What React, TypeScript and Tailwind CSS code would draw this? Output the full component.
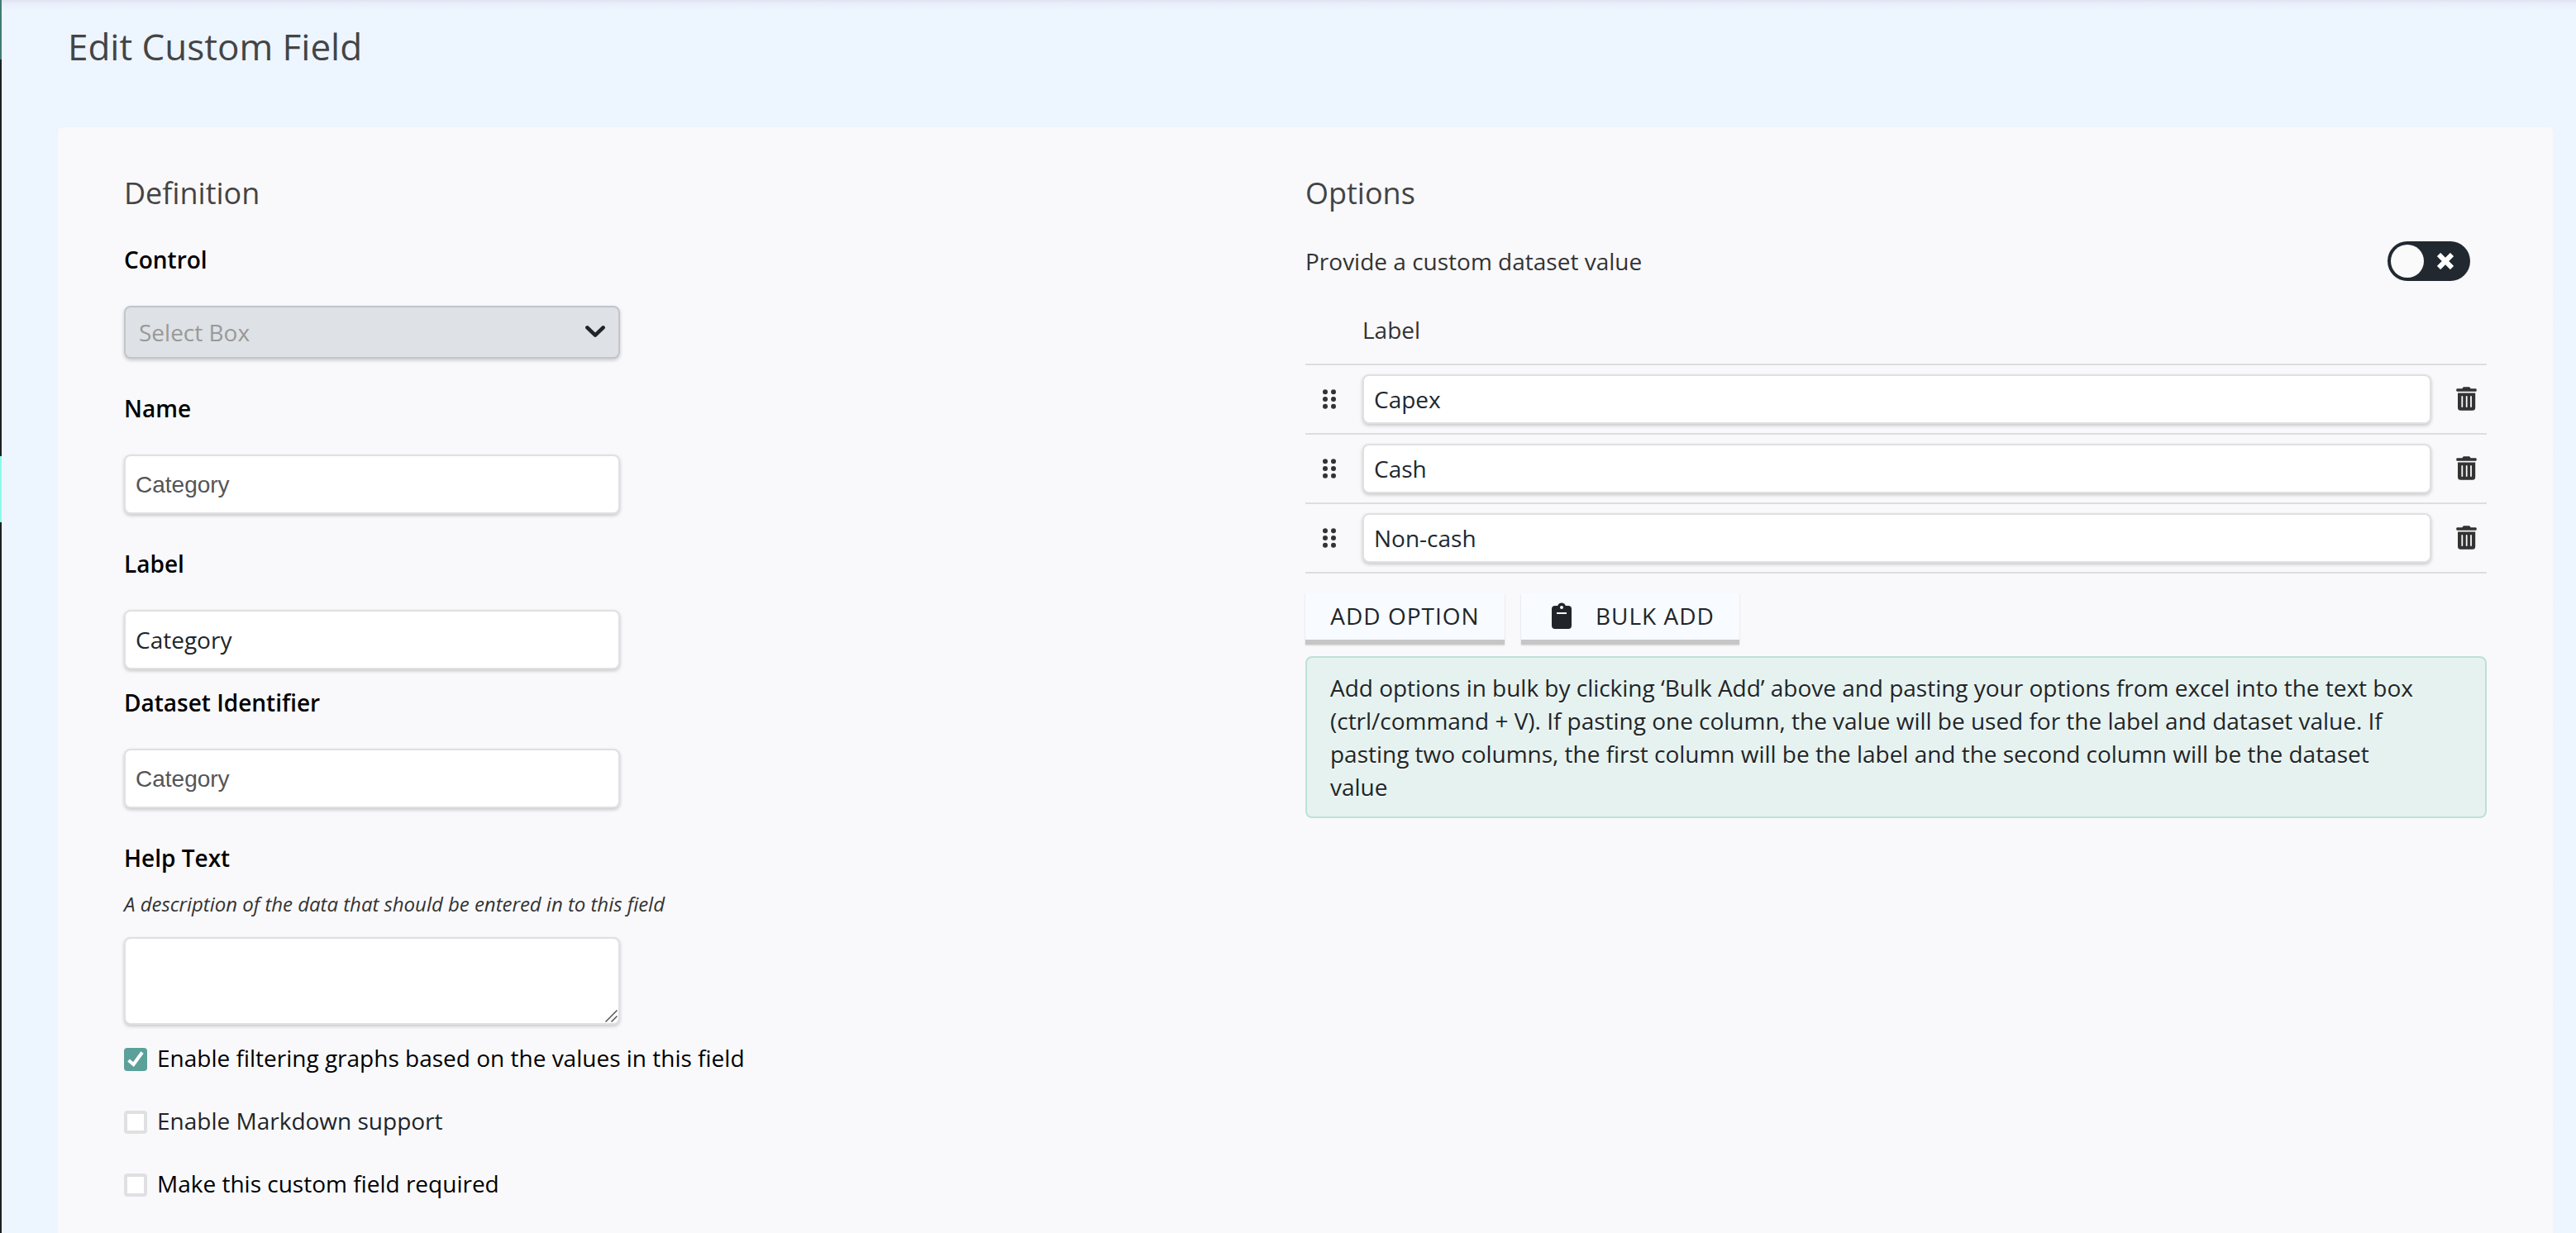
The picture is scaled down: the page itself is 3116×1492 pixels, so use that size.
import { useState } from 'react';

const initialOptions = ['Capex', 'Cash', 'Non-cash'];

const inputBase =
  'block rounded-lg border-2 border-[#dfe0e2] bg-white shadow-[0_2px_4px_rgba(0,0,0,0.2)] outline-none';

function FieldLabel({ children }: { children: string }) {
  return <label className="block h-10 text-[28px] leading-10 font-semibold text-black">{children}</label>;
}

function ChevronIcon() {
  return (
    <svg className="mb-0.5 h-4 w-6" viewBox="0 0 24 16" fill="none" stroke="#212529" strokeWidth="4.6" strokeLinecap="round" strokeLinejoin="round">
      <path d="m2.400 3.400 9.600 9.200 9.600-9.200" />
    </svg>
  );
}

function GripIcon() {
  return (
    <svg className="h-8 w-8" viewBox="0 0 32 32" fill="#333">
      {[7.3, 16, 24.7].map((cy) => (
        <g key={cy}>
          <circle cx="11" cy={cy} r="3" />
          <circle cx="21" cy={cy} r="3" />
        </g>
      ))}
    </svg>
  );
}

function TrashIcon() {
  return (
    <svg className="mb-px h-[29px] w-[25px]" viewBox="0 0 25 29">
      <path fill="#333" d="M7.500 2.200C8 .7 8.600.2 10 .2h5c1.400 0 2 .5 2.500 2h5.900c.9 0 1.400.6 1.400 1.700 0 1.200-.5 1.800-1.400 1.800H1.600C.7 5.700.2 5.100.2 3.900c0-1.100.5-1.700 1.400-1.700Z" />
      <path fill="#333" d="M2 7.500h21.200v17.700a3.600 3.600 0 0 1-3.600 3.600h-14A3.600 3.600 0 0 1 2 25.200Z" />
      <path stroke="#f9f9fb" strokeWidth="1.8" strokeLinecap="round" d="M7.300 12v12M12.700 12v12M18 12v12" />
    </svg>
  );
}

function ClipboardIcon() {
  return (
    <svg className="h-8 w-6" viewBox="0 0 24 32">
      <path
        fill="#212529"
        fillRule="evenodd"
        d="M4 4h3.200a5 5 0 0 1 9.600 0H20a4 4 0 0 1 4 4v20a4 4 0 0 1-4 4H4a4 4 0 0 1-4-4V8a4 4 0 0 1 4-4Zm8 0a2 2 0 1 0 0 4 2 2 0 0 0 0-4ZM6 12v2h12v-2Z"
      />
    </svg>
  );
}

function Checkbox({ label, checked, muted }: { label: string; checked?: boolean; muted?: boolean }) {
  return (
    <div className="flex h-[76px] items-start gap-3">
      {checked ? (
        <span className="flex h-7 w-7 items-center justify-center rounded bg-[#5ba199]">
          <svg className="h-5 w-5" viewBox="0 0 20 20" fill="none" stroke="#fff" strokeWidth="4">
            <path d="m1.500 11 6 5L18 1.500" />
          </svg>
        </span>
      ) : (
        <span className="h-7 w-7 rounded border-4 border-[#dfe0e2] bg-white" />
      )}
      <span className={muted ? '-mt-0.5 text-[28px] leading-7 text-[#212529]' : '-mt-0.5 text-[28px] leading-7 text-black'}>{label}</span>
    </div>
  );
}

export default function App() {
  const [options] = useState(initialOptions);

  return (
    <div className="flex h-[1492px] w-[3116px] overflow-hidden bg-[#edf5ff] font-['Open_Sans','Noto_Sans',sans-serif]">
      {/* Edge of the side navigation */}
      <div className="flex w-0.5 shrink-0 flex-col bg-[#1c2027] shadow-[0_0_6px_rgba(60,40,60,0.2)]">
        <div className="h-[72px] bg-[#417c73]" />
        <div className="mt-[480px] h-20 bg-[#8bf9ea]" />
      </div>

      <div className="flex grow flex-col bg-linear-to-b from-[#dfe3f0] via-[#eaf0fb] via-[5px] to-[#edf5ff] to-[14px] pr-7 pl-[68px]">
        <h1 className="h-[154px] shrink-0 pt-[26px] pl-3 text-[44px] leading-[61px] text-[#444]">Edit Custom Field</h1>

        <div className="flex grow rounded-t-md bg-[#f9f9fb] px-20">
          {/* Definition */}
          <section className="w-[1429px] pt-14">
            <h2 className="h-12 text-[36px] leading-12 text-[#444]">Definition</h2>

            <div className="mt-9">
              <FieldLabel>Control</FieldLabel>
              <div className="mt-9 flex h-16 w-[600px] items-center justify-between rounded-lg border-2 border-[#c2c6cb] bg-[#dee1e5] pr-4 pl-4 text-[28px] text-[#999] shadow-[0_2px_4px_rgba(0,0,0,0.2)]">
                <span>Select Box</span>
                <ChevronIcon />
              </div>
            </div>

            <div className="mt-10">
              <FieldLabel>Name</FieldLabel>
              <input className={`${inputBase} mt-9 h-[72px] w-[600px] px-3 pt-0.5 font-['Liberation_Sans',sans-serif] text-[28px] text-[#555]`} defaultValue="Category" />
            </div>

            <div className="mt-10">
              <FieldLabel>Label</FieldLabel>
              <input className={`${inputBase} mt-9 h-[72px] w-[600px] px-3 text-[28px] text-[#212529]`} defaultValue="Category" />
            </div>

            <div className="mt-5">
              <FieldLabel>Dataset Identifier</FieldLabel>
              <input className={`${inputBase} mt-9 h-[72px] w-[600px] px-3 pt-0.5 font-['Liberation_Sans',sans-serif] text-[28px] text-[#555]`} defaultValue="Category" />
            </div>

            <div className="mt-10">
              <FieldLabel>Help Text</FieldLabel>
              <p className="mt-4 text-[24px] leading-10 tracking-[-0.03px] text-[#333] italic">
                A description of the data that should be entered in to this field
              </p>
              <div className="relative mt-5 w-[600px]">
                <textarea className={`${inputBase} h-[106px] w-full resize-none`} />
                <svg className="absolute right-[3px] bottom-[3px] h-[15px] w-[15px]" viewBox="0 0 15 15" stroke="#555" strokeWidth="1.5">
                  <path d="M.5 14.500 14.500.5M7.500 14.500l7-7" />
                </svg>
              </div>
            </div>

            <div className="mt-7">
              <Checkbox label="Enable filtering graphs based on the values in this field" checked />
              <Checkbox label="Enable Markdown support" muted />
              <Checkbox label="Make this custom field required" />
            </div>
          </section>

          {/* Options */}
          <section className="w-[1429px] pt-14 text-[28px] text-[#333]">
            <h2 className="h-12 text-[36px] leading-12 text-[#444]">Options</h2>

            <div className="mt-[34px] flex h-12 items-center justify-between pr-5">
              <span>Provide a custom dataset value</span>
              <button className="flex h-12 w-[100px] items-center rounded-full bg-[#212830] p-1">
                <span className="h-10 w-10 rounded-full bg-[#fafafa]" />
                <svg className="ml-4 h-5 w-5" viewBox="0 0 20 20" stroke="#fff" strokeWidth="6">
                  <path d="m2 2 16 16M18 2 2 18" />
                </svg>
              </button>
            </div>

            <div className="h-[102px] border-b-2 border-[#dcdde0] pt-[39px] pl-[69px] leading-10">Label</div>
            {options.map((opt) => (
              <div key={opt} className="flex h-[84px] items-center border-b-2 border-[#dcdde0]">
                <div className="flex w-[69px] justify-center pr-[11px]">
                  <GripIcon />
                </div>
                <input className={`${inputBase} h-[60px] w-[1293px] px-3 text-[28px] text-[#212830]`} defaultValue={opt} />
                <button className="ml-[30px]">
                  <TrashIcon />
                </button>
              </div>
            ))}

            <div className="mt-6 flex gap-5 text-[28px] tracking-[1px] text-[#212529]">
              <button className="flex h-[62px] w-[241px] items-center justify-center border-b-[6px] border-[#c6c6c6] bg-[#f8fbff] pb-0.5 shadow-[0_1px_2px_rgba(0,0,0,0.15)]">
                ADD OPTION
              </button>
              <button className="flex h-[62px] w-[264px] items-center border-b-[6px] border-[#c6c6c6] bg-[#f8fbff] pb-0.5 pl-[37px] shadow-[0_1px_2px_rgba(0,0,0,0.15)]">
                <ClipboardIcon />
                <span className="ml-[29px]">BULK ADD</span>
              </button>
            </div>

            <div className="mt-3.5 h-[196px] rounded-lg border-2 border-[#bfe0da] bg-[#e5f2ef] pt-4 pr-20 pl-7 leading-10 tracking-[-0.02px] text-[#212529] [text-shadow:0_2px_0_rgba(255,255,255,0.5)]">
              Add options in bulk by clicking ‘Bulk Add’ above and pasting your options from excel into the text box
              (ctrl/command + V). If pasting one column, the value will be used for the label and dataset value. If
              pasting two columns, the first column will be the label and the second column will be the dataset value
            </div>
          </section>
        </div>
      </div>
    </div>
  );
}
